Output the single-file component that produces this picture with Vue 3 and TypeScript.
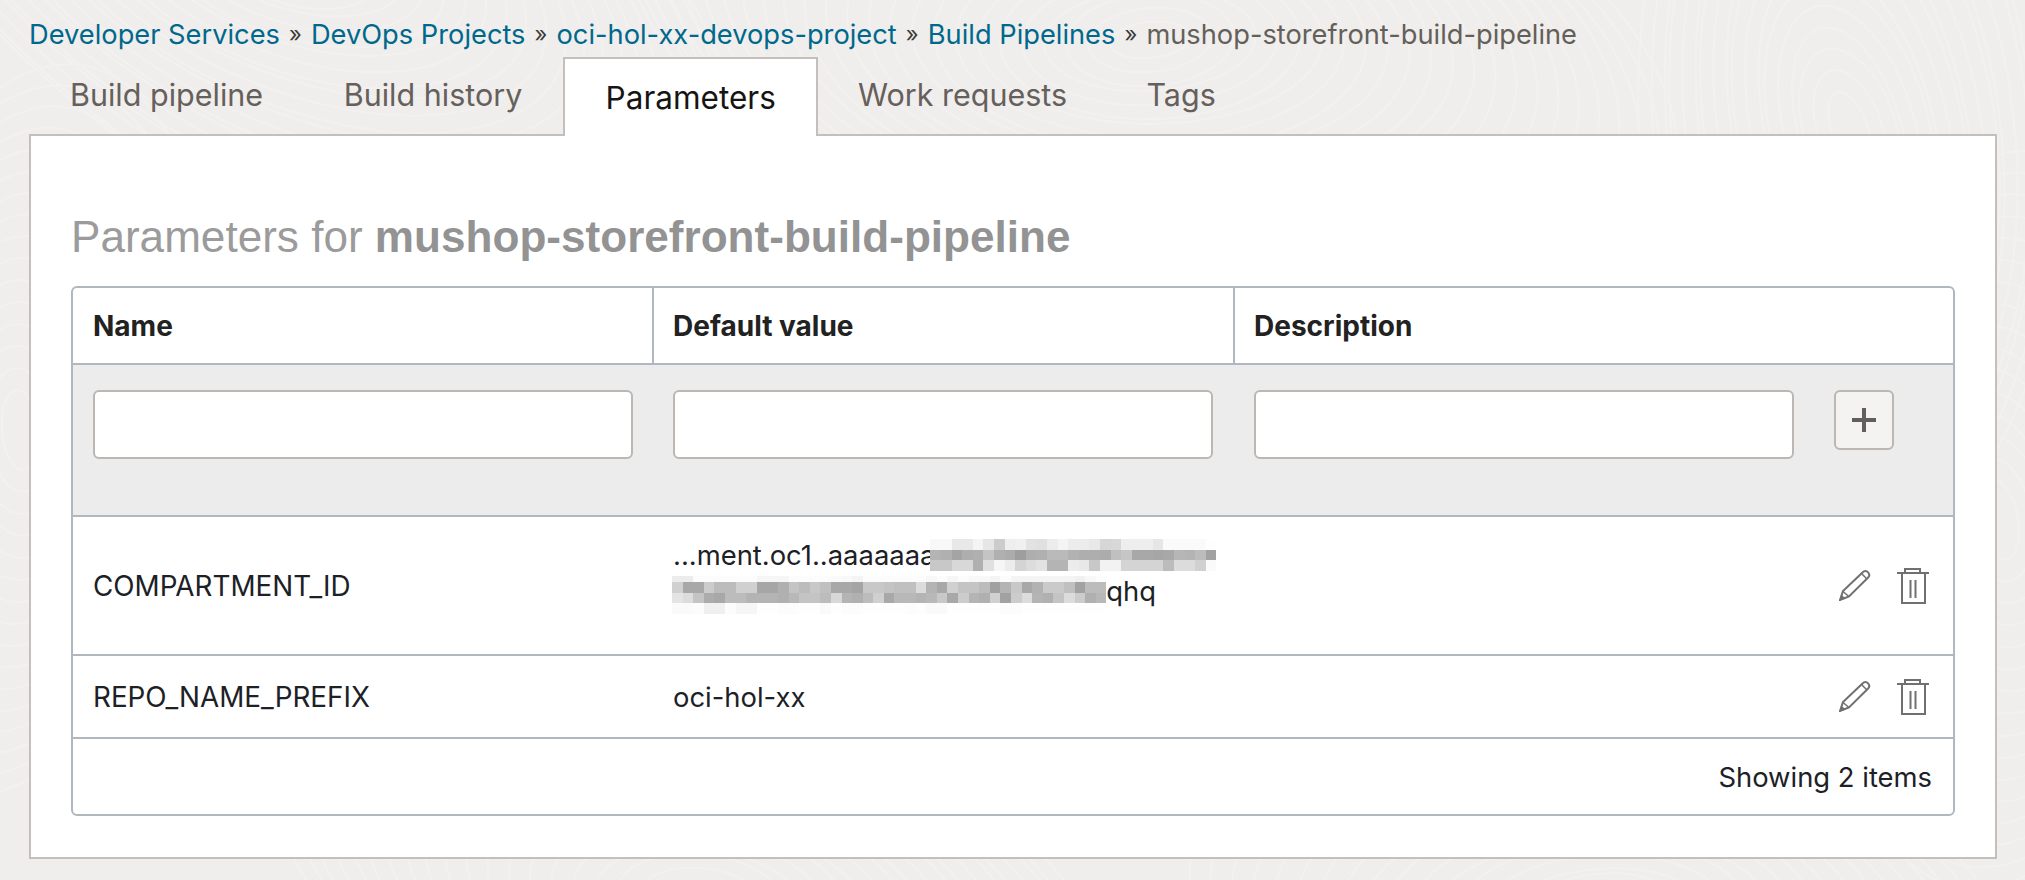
<template>
  <div class="page">
    <svg class="grain" width="2025" height="880" aria-hidden="true">
      <ellipse
        v-for="(r, i) in rings"
        :key="i"
        :cx="r.cx"
        :cy="r.cy"
        :rx="r.rx"
        :ry="r.ry"
        :transform="`rotate(${r.rot} ${r.cx} ${r.cy})`"
      />
    </svg>

    <nav class="crumbs">
      <template v-for="c in crumbs" :key="c">
        <a href="#">{{ c }}</a>
        <span class="sep">»</span>
      </template>
      <span class="current">mushop-storefront-build-pipeline</span>
    </nav>

    <div class="tabs">
      <div v-for="t in tabs" :key="t" class="tab" :class="{ active: t === 'Parameters' }">{{ t }}</div>
    </div>

    <section class="panel">
      <h1>Parameters for <b>mushop-storefront-build-pipeline</b></h1>

      <div class="table">
        <div class="row head">
          <div class="cell">Name</div>
          <div class="cell">Default value</div>
          <div class="cell">Description</div>
        </div>

        <div class="row add">
          <div class="cell"><input type="text" /></div>
          <div class="cell"><input type="text" /></div>
          <div class="cell last">
            <input type="text" />
            <button class="plus" type="button">
              <svg width="24" height="24" viewBox="0 0 24 24"><path d="M12 0v24M0 12h24" /></svg>
            </button>
          </div>
        </div>

        <div class="row item tall">
          <div class="cell key">COMPARTMENT_ID</div>
          <div class="cell value">
            <div class="line">
              <span>...ment.oc1..aaaaaaa</span>
              <span class="mosaic first">
                <span v-for="(row, i) in mosaicA" :key="i" class="mrow">
                  <i v-for="(c, j) in row" :key="j" :style="{ background: c }"></i>
                </span>
              </span>
            </div>
            <div class="line">
              <span class="mosaic second">
                <span v-for="(row, i) in mosaicB" :key="i" class="mrow">
                  <i v-for="(c, j) in row" :key="j" :style="{ background: c }"></i>
                </span>
              </span>
              <span>qhq</span>
            </div>
          </div>
          <div class="cell actions">
            <svg class="pencil" width="32" height="31" viewBox="0 0 32 31">
              <use href="#pencil-shape" />
            </svg>
            <svg class="trash" width="32" height="36" viewBox="0 0 32 36">
              <use href="#trash-shape" />
            </svg>
          </div>
        </div>

        <div class="row item short">
          <div class="cell key">REPO_NAME_PREFIX</div>
          <div class="cell">oci-hol-xx</div>
          <div class="cell actions">
            <svg class="pencil" width="32" height="31" viewBox="0 0 32 31">
              <use href="#pencil-shape" />
            </svg>
            <svg class="trash" width="32" height="36" viewBox="0 0 32 36">
              <use href="#trash-shape" />
            </svg>
          </div>
        </div>

        <div class="foot">Showing 2 items</div>
      </div>
    </section>

    <svg width="0" height="0" class="defs" aria-hidden="true">
      <defs>
        <g id="pencil-shape">
          <path d="M1 30l3-9L23.500 2.500c2-2 4-1.800 5.600-.1 1.600 1.700 1.600 3.600-.2 5.400L10 26.500z" fill="none" stroke="#707070" stroke-width="2" />
          <path d="M4 21.500l6 5" fill="none" stroke="#707070" stroke-width="1.500" />
          <path d="M22.500 3.500l5.500 5.500" fill="none" stroke="#707070" stroke-width="1.500" />
          <path d="M.5 30.500l1.800-6 4.200 4z" fill="#707070" />
        </g>
        <g id="trash-shape" fill="none" stroke="#707070" stroke-width="2">
          <path d="M0 5h32M8 5V1h15v4M5 5v30h23V5M13.500 12v18M18.500 12v18" />
        </g>
      </defs>
    </svg>
  </div>
</template>

<script setup lang="ts">
const crumbs = ['Developer Services', 'DevOps Projects', 'oci-hol-xx-devops-project', 'Build Pipelines']
const tabs = ['Build pipeline', 'Build history', 'Parameters', 'Work requests', 'Tags']

// pixelated redaction, one hex gray per cell
const toRows = (rows: string[]) =>
  rows.map((r) => r.split(' ').map((v) => `#${v}${v}${v}`))

const mosaicA = toRows([
  'f8 f8 e8 e8 f4 e6 cc ee f0 e2 e0 ec f4 ec ec e8 d6 d8 ee ee ee e6 fa fa fa fa fe',
  'b4 b0 a4 ae b0 c4 b0 ac 9e ae b0 ba ba b2 ae ae ac c0 c6 a8 a8 a6 a8 b6 b4 bc a2',
  'c8 c8 d8 d8 b0 e0 f6 ec d4 dc e2 b4 b4 ec e8 c8 f2 f2 d4 d4 d4 d4 bc dc dc d0 fa',
])

const mosaicB = toRows([
  'ec ec fc fc fc fc fc fc f6 f6 f6 fc fc fc fc fa f8 f4 fc fc fc fc fc fc f8 fc f6 fc f8 f8 f4 fc f4 f4 f4 f4 f4 f4 f0 f8 fc',
  'd0 a8 a8 cc bc bc d0 d0 a6 a6 b0 c4 bc c8 c0 a8 a8 a4 c8 c8 c4 c0 c0 dc b4 a8 d0 c4 c4 bc a0 b4 c8 a8 b2 ca ca c0 a2 bc bc',
  'e4 dc c4 ac a8 bc bc b4 b4 b4 b0 b8 c4 c4 bc d8 b4 b0 bc d0 a8 b8 b8 b4 b8 c8 a8 cc b4 b0 d0 a2 cc dc b4 b0 c4 dc cc b0 b8',
  'fa fa fc f0 f0 fc f6 f6 fe fe fc fc fe fe fa fe fc fc fe fe fe fe fc fe fa fa fe fe fe fe fe fc fc fe fe fe fe fe fe fe fe',
])

// wood grain behind the page: nested rotated rings
const seeds = [
  { cx: 300, cy: -40, rot: 12, n: 22 },
  { cx: 1150, cy: 40, rot: -6, n: 24 },
  { cx: 1850, cy: 130, rot: 70, n: 18 },
  { cx: 2000, cy: 520, rot: 80, n: 16 },
  { cx: 20, cy: 430, rot: 85, n: 16 },
  { cx: 700, cy: 900, rot: 4, n: 20 },
  { cx: 1600, cy: 920, rot: -8, n: 18 },
]
const rings = seeds.flatMap((s) =>
  Array.from({ length: s.n }, (_, i) => ({
    cx: s.cx,
    cy: s.cy,
    rx: 40 + i * 22,
    ry: 18 + i * 11 + (i % 3) * 3,
    rot: s.rot + i,
  })),
)
</script>

<style>
html,
body {
  margin: 0;
  background: #efeeec;
}
</style>

<style scoped>
.page {
  position: relative;
  width: 2025px;
  height: 880px;
  overflow: hidden;
  box-sizing: border-box;
  padding: 17px 28px 0 29px;
  background: #efeeec;
  font-family: Inter, 'Liberation Sans', sans-serif;
  color: #1c2126;
}

.grain {
  position: absolute;
  inset: 0;
}

.grain ellipse {
  fill: none;
  stroke: #f2f1ef;
  stroke-width: 2;
}

.defs {
  position: absolute;
}

.crumbs,
.tabs,
.panel {
  position: relative;
}

.crumbs {
  display: flex;
  align-items: center;
  height: 34px;
  font-size: 27.250px;
  white-space: nowrap;
}

.crumbs a {
  color: #00688c;
  text-decoration: none;
}

.sep {
  width: 31px;
  text-align: center;
  color: #3d3a38;
  font-size: 22px;
}

.current {
  color: #655f5a;
}

.tabs {
  display: flex;
  height: 79px;
  margin-top: 6px;
  margin-bottom: -2px;
  z-index: 1;
}

.tab {
  box-sizing: border-box;
  padding: 0 40.300px;
  height: 79px;
  line-height: 76px;
  font-size: 30.500px;
  color: #665f5b;
  white-space: nowrap;
}

.tab:first-child {
  margin-left: 0.700px;
}

.tab:last-child {
  padding-left: 39px;
}

.tab.active {
  background: #fff;
  border: 2px solid #c4bfba;
  border-bottom: 0;
  padding: 0 39.800px 0 41px;
  line-height: 77px;
  font-size: 31.500px;
  color: #161513;
}

.panel {
  box-sizing: border-box;
  height: 725px;
  border: 2px solid #c4bfba;
  background: #fff;
  padding: 0 40px;
}

h1 {
  margin: 0;
  height: 150px;
  padding-top: 73px;
  box-sizing: border-box;
  font-family: 'Liberation Sans', Arial, sans-serif;
  font-size: 44.100px;
  line-height: 56px;
  font-weight: 400;
  color: #9b9b9b;
  white-space: nowrap;
}

h1 b {
  font-weight: 700;
  color: #939393;
}

.table {
  box-sizing: border-box;
  height: 530px;
  border: 2px solid #b1b7c0;
  border-radius: 6px;
  overflow: hidden;
  font-size: 27.400px;
}

.row {
  display: grid;
  grid-template-columns: 580px 581px 1fr;
  border-bottom: 2px solid #b1b7c0;
  box-sizing: border-box;
}

.cell {
  display: flex;
  align-items: center;
  padding-left: 20px;
  min-width: 0;
}

.key {
  font-size: 27.800px;
}

.head {
  height: 77px;
  font-size: 28px;
  font-weight: 700;
  color: #222;
}

.head .cell + .cell {
  border-left: 2px solid #b1b7c0;
  margin-left: -1px;
  padding-left: 19px;
}

.add {
  height: 152px;
  background: #ececec;
}

.add .cell {
  align-items: flex-start;
  padding-top: 25px;
}

.add input {
  box-sizing: border-box;
  width: 540px;
  height: 69px;
  flex: none;
  padding: 0 12px;
  background: #fff;
  border: 2px solid #bcb7b2;
  border-radius: 6px;
  outline: none;
}

.add .cell.last {
  gap: 40px;
}

.plus {
  display: flex;
  align-items: center;
  justify-content: center;
  box-sizing: border-box;
  flex: none;
  width: 60px;
  height: 60px;
  padding: 0;
  background: #f4f3f1;
  border: 2px solid #bcb7b2;
  border-radius: 6px;
}

.plus path {
  fill: none;
  stroke: #615e5b;
  stroke-width: 4;
}

.tall {
  height: 139px;
}

.short {
  height: 83px;
}

.value {
  flex-direction: column;
  align-items: flex-start;
  justify-content: center;
  padding-bottom: 25px;
}

.line {
  display: flex;
  align-items: center;
  height: 36px;
}

.mosaic {
  display: flex;
  flex-direction: column;
  flex: none;
  position: relative;
}

.mosaic.first {
  margin-left: -5px;
}

.mosaic.second {
  margin-left: -1px;
  top: 4px;
}

.mrow {
  display: flex;
  height: 10.700px;
}

.second .mrow:first-child {
  height: 6px;
}

.mrow i {
  display: block;
  width: 10.600px;
  flex: none;
}

.actions {
  justify-content: flex-end;
  gap: 26px;
  padding-right: 24px;
}

.foot {
  height: 76px;
  display: flex;
  align-items: center;
  justify-content: flex-end;
  padding-right: 21px;
}
</style>
